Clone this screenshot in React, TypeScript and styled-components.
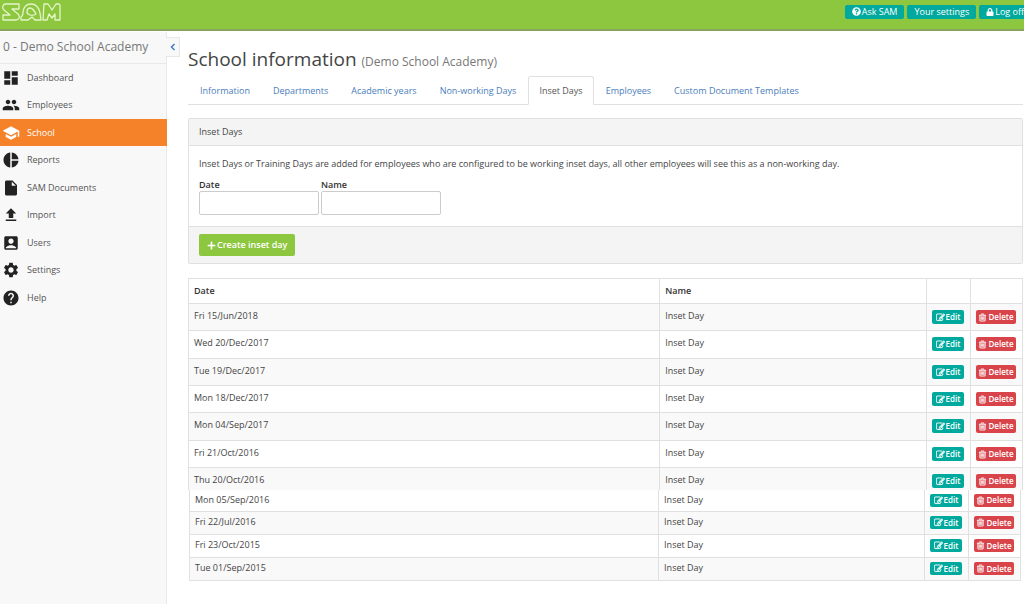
import React from 'react';
import styled, { createGlobalStyle, css } from 'styled-components';
import {
  MdAccountBox,
  MdDashboard,
  MdFileUpload,
  MdHelp,
  MdInsertDriveFile,
  MdPeople,
  MdPieChart,
  MdSchool,
  MdSettings,
} from 'react-icons/md';
import { FaLock, FaPlus, FaQuestionCircle } from 'react-icons/fa';

const GlobalStyle = createGlobalStyle`
  *, *::before, *::after { box-sizing: border-box; }
  body {
    margin: 0;
    background: #fff;
    color: #444;
    font: 9px/14px "Open Sans", "Noto Sans", sans-serif;
    overflow-x: hidden;
  }
  button, input { font: inherit; }
  a { text-decoration: none; }
`;

const Page = styled.div`
  display: flex;
  flex-direction: column;
  min-height: 100vh;
`;

const TopBar = styled.header`
  display: flex;
  justify-content: space-between;
  height: 31px;
  flex: none;
  padding-left: 2px;
  overflow: hidden;
  background: #8dc63f;
  border-bottom: 2px solid #86a45c;
`;

const LogoLink = styled.a`
  display: block;
  padding-top: 2px;
`;

const LogoDrawing = styled.svg`
  display: block;
  fill: none;
  stroke: #e4f5c8;
  stroke-width: 1.3;
  stroke-linejoin: round;
`;

const TopActions = styled.div`
  display: flex;
  gap: 3px;
  padding-top: 5px;
`;

const TopButton = styled.button<{ $flush?: boolean }>`
  display: flex;
  align-items: center;
  gap: 1px;
  height: 14px;
  padding: 0 7px 1px;
  border: 0;
  border-radius: 2px;
  background: #00a99d;
  color: #fff;
  line-height: 13px;
  white-space: nowrap;
  ${(p) =>
    p.$flush &&
    css`
      padding-right: 0;
      border-radius: 2px 0 0 2px;
    `}
`;

const Body = styled.div`
  display: flex;
  flex: 1;
  padding-top: 1px;
`;

const Sidebar = styled.nav`
  position: relative;
  flex: none;
  width: 167px;
  background: #f8f8f8;
  border-right: 1px solid #e9e9e9;
`;

const SchoolName = styled.div`
  height: 32px;
  padding-left: 3px;
  border-bottom: 1px solid #e9e9e9;
  color: #777;
  font-size: 12px;
  line-height: 29px;
  white-space: nowrap;
`;

const CollapseButton = styled.button`
  position: absolute;
  top: 5px;
  left: 166px;
  display: grid;
  place-items: center;
  width: 14px;
  height: 20px;
  padding: 0;
  border: 1px solid #e7e7e7;
  border-left: 0;
  background: #f8f8f8;
`;

const MenuList = styled.ul`
  margin: 0;
  padding: 0;
  list-style: none;
`;

const MenuItem = styled.li`
  height: 27px;
  &:nth-child(even) { height: 28px; }
`;

const MenuLink = styled.a<{ $active?: boolean }>`
  display: flex;
  align-items: center;
  gap: 7px;
  height: 100%;
  margin-right: -1px;
  padding-left: 2px;
  color: ${(p) => (p.$active ? '#fff' : '#555')};
  background: ${(p) => (p.$active ? '#f58229' : 'transparent')};
  svg {
    width: 18px;
    height: 18px;
    color: ${(p) => (p.$active ? '#fff' : '#222')};
  }
`;

const Main = styled.main`
  flex: 1;
  min-width: 0;
  padding: 14px 1px 24px 21px;
`;

const Title = styled.h1`
  margin: 0;
  color: #444;
  font-size: 19px;
  font-weight: 400;
  line-height: 26px;
  small {
    color: #777;
    font-size: 12px;
  }
`;

const Tabs = styled.nav`
  display: flex;
  gap: 1px;
  margin-top: 1px;
  padding-left: 1px;
  border-bottom: 1px solid #e0e0e0;
`;

const Tab = styled.a<{ $active?: boolean }>`
  height: 29px;
  margin-bottom: -1px;
  padding: 0 10px;
  border: 1px solid transparent;
  border-radius: 3px 3px 0 0;
  color: #4a7ebb;
  line-height: 27px;
  white-space: nowrap;
  ${(p) =>
    p.$active &&
    css`
      border-color: #e0e0e0 #e0e0e0 #fff;
      background: #fff;
      color: #555;
    `}
`;

const Panel = styled.form`
  margin: 13px 0 14px;
  border: 1px solid #e0e0e0;
  border-radius: 2px;
`;

const PanelHeading = styled.h2`
  height: 27px;
  margin: 0;
  padding-left: 10px;
  border-bottom: 1px solid #e0e0e0;
  background: #f4f4f4;
  color: #444;
  font-size: 9px;
  font-weight: 400;
  line-height: 26px;
`;

const PanelBody = styled.div`
  padding: 11px 10px;
`;

const Intro = styled.p`
  margin: 0 0 7px;
`;

const Fields = styled.div`
  display: flex;
  gap: 2px;
`;

const Field = styled.label`
  display: flex;
  flex-direction: column;
  color: #333;
  font-weight: 600;
  line-height: 13px;
`;

const TextBox = styled.input`
  width: 120px;
  height: 24px;
  padding: 0 6px;
  border: 1px solid #ccc;
  border-radius: 2px;
  background: #fff;
`;

const PanelFooter = styled.div`
  padding: 7px 10px;
  border-top: 1px solid #e0e0e0;
  background: #f4f4f4;
`;

const CreateButton = styled.button`
  display: flex;
  align-items: center;
  gap: 1px;
  height: 22px;
  padding: 0 8px;
  border: 0;
  border-radius: 2px;
  background: #8dc63f;
  color: #fff;
  font-weight: 600;
`;

const DayTable = styled.table<{ $compact?: boolean }>`
  width: ${(p) => (p.$compact ? 'calc(100% - 3px)' : '100%')};
  margin-left: ${(p) => (p.$compact ? '1px' : '0')};
  table-layout: fixed;
  border-collapse: collapse;
  tbody tr { height: ${(p) => (p.$compact ? '23px' : '27px')}; }
  ${(p) =>
    p.$compact
      ? css`
          tbody tr:first-child { height: 22px; }
          tbody tr:first-child td { border-top: 0; }
        `
      : css`
          tbody tr:nth-child(3n + 2) { height: 28px; }
          tbody tr:last-child { height: 22px; }
          tbody tr:last-child td { border-bottom: 0; }
        `}
  tbody tr:nth-child(${(p) => (p.$compact ? 'even' : 'odd')}) { background: #f9f9f9; }
`;

const NameCol = styled.col`
  width: 32%;
`;

const EditCol = styled.col`
  width: 44px;
`;

const DeleteCol = styled.col`
  width: 52px;
`;

const HeadCell = styled.th`
  height: 25px;
  padding: 0 5px;
  border: 1px solid #e0e0e0;
  color: #333;
  font-weight: 600;
  text-align: left;
`;

const Cell = styled.td<{ $compact?: boolean }>`
  padding: ${(p) => (p.$compact ? '3px' : '5px')} 5px 0;
  border: 1px solid #e0e0e0;
  line-height: 14px;
  vertical-align: top;
`;

const ActionCell = styled(Cell)`
  padding-top: ${(p) => (p.$compact ? '4px' : '6px')};
`;

const RowButton = styled.button<{ $danger?: boolean; $compact?: boolean }>`
  display: flex;
  align-items: center;
  justify-content: center;
  gap: 1px;
  width: ${(p) => (p.$danger ? '40px' : '32px')};
  height: ${(p) => (p.$compact ? '13px' : '14px')};
  padding: 0;
  border: 0;
  border-radius: 2px;
  background: ${(p) => (p.$danger ? '#d9434a' : '#00a99d')};
  color: #fff;
  font-size: 8px;
  font-weight: 600;
  line-height: 12px;
`;

const Glyph = styled.svg`
  flex: none;
  width: 9px;
  height: 9px;
  fill: currentColor;
  stroke: currentColor;
  stroke-width: 60;
`;

const EditIcon = () => (
  <Glyph viewBox="0 0 1792 1792" aria-hidden="true">
    <path d="M888 1184l116-116-152-152-116 116v56h96v96h56zm440-720q-16-16-33 1l-350 350q-17 17-1 33t33-1l350-350q17-17 1-33zm80 594v190q0 119-84.5 203.5t-203.5 84.5h-832q-119 0-203.5-84.5t-84.5-203.5v-832q0-119 84.5-203.5t203.5-84.5h832q63 0 117 25 15 7 18 23 3 17-9 29l-49 49q-14 14-32 8-23-6-45-6h-832q-66 0-113 47t-47 113v832q0 66 47 113t113 47h832q66 0 113-47t47-113v-126q0-13 9-22l64-64q15-15 35-7t20 29zm-96-738l288 288-672 672h-288v-288zm444 132l-92 92-288-288 92-92q28-28 68-28t68 28l152 152q28 28 28 68t-28 68z" />
  </Glyph>
);

const TrashIcon = () => (
  <Glyph viewBox="0 0 1792 1792" aria-hidden="true">
    <path d="M704 736v576q0 14-9 23t-23 9h-64q-14 0-23-9t-9-23v-576q0-14 9-23t23-9h64q14 0 23 9t9 23zm256 0v576q0 14-9 23t-23 9h-64q-14 0-23-9t-9-23v-576q0-14 9-23t23-9h64q14 0 23 9t9 23zm256 0v576q0 14-9 23t-23 9h-64q-14 0-23-9t-9-23v-576q0-14 9-23t23-9h64q14 0 23 9t9 23zm128 724v-948h-896v948q0 22 7 40.5t14.5 27 10.5 8.5h832q3 0 10.5-8.5t14.5-27 7-40.5zm-672-1076h448l-48-117q-7-9-17-11h-317q-10 2-17 11zm928 32v64q0 14-9 23t-23 9h-96v948q0 83-47 143.5t-113 60.5h-832q-66 0-113-58.5t-47-141.5v-952h-96q-14 0-23-9t-9-23v-64q0-14 9-23t23-9h309l70-167q15-37 54-63t79-26h320q40 0 79 26t54 63l70 167h309q14 0 23 9t9 23z" />
  </Glyph>
);

const menu = [
  { label: 'Dashboard', Icon: MdDashboard },
  { label: 'Employees', Icon: MdPeople },
  { label: 'School', Icon: MdSchool, active: true },
  { label: 'Reports', Icon: MdPieChart },
  { label: 'SAM Documents', Icon: MdInsertDriveFile },
  { label: 'Import', Icon: MdFileUpload },
  { label: 'Users', Icon: MdAccountBox },
  { label: 'Settings', Icon: MdSettings },
  { label: 'Help', Icon: MdHelp },
];

const tabs = [
  'Information',
  'Departments',
  'Academic years',
  'Non-working Days',
  'Inset Days',
  'Employees',
  'Custom Document Templates',
];

const recentDays = [
  'Fri 15/Jun/2018',
  'Wed 20/Dec/2017',
  'Tue 19/Dec/2017',
  'Mon 18/Dec/2017',
  'Mon 04/Sep/2017',
  'Fri 21/Oct/2016',
  'Thu 20/Oct/2016',
];

const olderDays = ['Mon 05/Sep/2016', 'Fri 22/Jul/2016', 'Fri 23/Oct/2015', 'Tue 01/Sep/2015'];

function Days({ days, compact }: { days: string[]; compact?: boolean }) {
  return (
    <DayTable $compact={compact}>
      <colgroup>
        <col />
        <NameCol />
        <EditCol />
        <DeleteCol />
      </colgroup>
      {!compact && (
        <thead>
          <tr>
            <HeadCell scope="col">Date</HeadCell>
            <HeadCell scope="col">Name</HeadCell>
            <HeadCell aria-label="Edit" />
            <HeadCell aria-label="Delete" />
          </tr>
        </thead>
      )}
      <tbody>
        {days.map((day) => (
          <tr key={day}>
            <Cell $compact={compact}>{day}</Cell>
            <Cell $compact={compact}>Inset Day</Cell>
            <ActionCell $compact={compact}>
              <RowButton type="button" $compact={compact}>
                <EditIcon />
                Edit
              </RowButton>
            </ActionCell>
            <ActionCell $compact={compact}>
              <RowButton type="button" $danger $compact={compact}>
                <TrashIcon />
                Delete
              </RowButton>
            </ActionCell>
          </tr>
        ))}
      </tbody>
    </DayTable>
  );
}

export default function App() {
  return (
    <Page>
      <GlobalStyle />
      <TopBar>
        <LogoLink href="#" aria-label="SAM home">
          <LogoDrawing width="60" height="20" viewBox="0 0 60 20">
            <path d="M3 2h14v5h-7l6 5q2 2 1 4t-3 2H1v-5h7l-6-5Q0 6 1 4t2-2z" />
            <path d="M19 15q2-1 2-5 1-8 8-8 7 0 9 9l1 7h-6l-3-3-4 3h-7z M25 10q0-4 3-4t6 6q-3 2-6 1t-3-3z" />
            <path d="M42 2h4l4 6 4-6h3q1 0 1 2v14h-5v-6l-3 4-3-4-2 6h-4z" />
          </LogoDrawing>
        </LogoLink>
        <TopActions>
          <TopButton type="button">
            <FaQuestionCircle />
            Ask SAM
          </TopButton>
          <TopButton type="button">Your settings</TopButton>
          <TopButton type="button" $flush>
            <FaLock size={8} />
            Log off
          </TopButton>
        </TopActions>
      </TopBar>
      <Body>
        <Sidebar aria-label="Main">
          <SchoolName>0 - Demo School Academy</SchoolName>
          <CollapseButton type="button" aria-label="Collapse menu">
            <svg width="6" height="8" viewBox="0 0 6 8" fill="none" stroke="#3f7fc4" strokeWidth="1.5">
              <path d="M4.500 1L1.500 4l3 3" />
            </svg>
          </CollapseButton>
          <MenuList>
            {menu.map(({ label, Icon, active }) => (
              <MenuItem key={label}>
                <MenuLink href="#" $active={active}>
                  <Icon />
                  {label}
                </MenuLink>
              </MenuItem>
            ))}
          </MenuList>
        </Sidebar>
        <Main>
          <Title>
            School information <small>(Demo School Academy)</small>
          </Title>
          <Tabs aria-label="School sections">
            {tabs.map((label) => (
              <Tab key={label} href="#" $active={label === 'Inset Days'}>
                {label}
              </Tab>
            ))}
          </Tabs>
          <Panel>
            <PanelHeading>Inset Days</PanelHeading>
            <PanelBody>
              <Intro>
                Inset Days or Training Days are added for employees who are configured to be working inset days, all
                other employees will see this as a non-working day.
              </Intro>
              <Fields>
                <Field>
                  Date
                  <TextBox type="text" />
                </Field>
                <Field>
                  Name
                  <TextBox type="text" />
                </Field>
              </Fields>
            </PanelBody>
            <PanelFooter>
              <CreateButton type="button">
                <FaPlus size={9} />
                Create inset day
              </CreateButton>
            </PanelFooter>
          </Panel>
          <Days days={recentDays} />
          <Days days={olderDays} compact />
        </Main>
      </Body>
    </Page>
  );
}
